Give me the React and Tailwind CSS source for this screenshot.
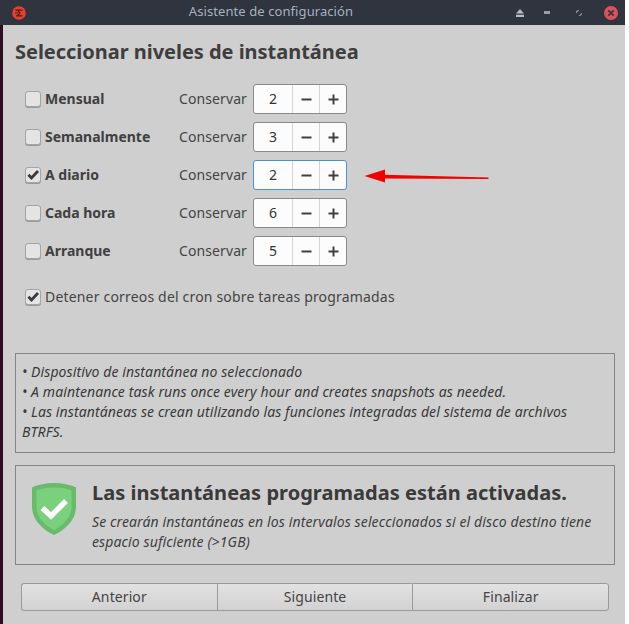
const font = { fontFamily: '"Noto Sans", sans-serif' };

function Check({ checked }) {
  return (
    <span className="relative flex h-[16px] w-[16px] shrink-0 items-center justify-center rounded-[3px] border border-[#a4a4a4] bg-[#e4e4e4] shadow-[0_1px_0_#9a9a9a]">
      {checked && (
        <svg width="14" height="14" viewBox="0 0 14 14" className="absolute left-[0px] top-[0px]">
          <path d="M2.4 6.8 L5.5 10 L12 3" fill="none" stroke="#3a3a3a" strokeWidth="2.8" />
        </svg>
      )}
    </span>
  );
}

function Row({ label, value, checked, focused }) {
  return (
    <div className="flex h-[30px] items-center">
      <div className="flex w-[154px] shrink-0 items-center gap-[4px]">
        <Check checked={checked} />
        <span className="pb-[2px] text-[14px] font-bold text-[#404040]">{label}</span>
      </div>
      <span className="w-[74px] shrink-0 pb-[2px] text-[14px] tracking-[0.1px] text-[#444444]">Conservar</span>
      <div
        className={
          "flex h-[30px] w-[94px] items-stretch overflow-hidden rounded-[3px] border bg-[#fcfcfc] " +
          (focused ? "border-[#4a90d9]" : "border-[#8a8a8a]")
        }
      >
        <div className="flex w-[38px] items-center justify-center pb-[1px] text-[14px] text-[#333333]">{value}</div>
        <div className="flex w-[27px] items-center justify-center border-l border-[#d4d4d4]">
          <svg width="11" height="11" viewBox="0 0 11 11"><path d="M0.5 5.5H10.5" stroke="#404040" strokeWidth="2" /></svg>
        </div>
        <div className="flex flex-1 items-center justify-center border-l border-[#d4d4d4]">
          <svg width="11" height="11" viewBox="0 0 11 11"><path d="M0.5 5.5H10.5M5.5 0.5V10.5" stroke="#404040" strokeWidth="2" /></svg>
        </div>
      </div>
    </div>
  );
}

function Btn({ children, cls }) {
  return (
    <div className={"flex h-[28px] flex-1 items-center justify-center border border-[#9a9a9a] bg-gradient-to-b from-[#e2e2e2] to-[#d2d2d2] pb-[1px] text-[14px] tracking-[0.1px] text-[#444444] " + cls}>
      {children}
    </div>
  );
}

export default function App() {
  return (
    <div style={font} className="flex h-[624px] w-[625px] flex-col overflow-hidden">
      <div className="flex h-[25px] shrink-0 items-center bg-[#2f343f] pl-[12px] pr-[7px]">
        <svg width="14" height="14" viewBox="0 0 14 14">
          <circle cx="7" cy="7" r="6.8" fill="#e8402d" />
          <path d="M3.5 4.2h7M4 9.8h6.5M5.5 4.2 8 7 5.5 9.8M3 7h3" fill="none" stroke="#4a1a18" strokeWidth="1.2" />
        </svg>
        <div className="flex-1 pb-[1px] text-center text-[13px] tracking-[0.08px] text-[#a9b0bd]">Asistente de configuración</div>
        <div className="flex items-center">
          <svg width="8" height="8" viewBox="0 0 8 8" className="mr-[20px]">
            <path d="M4 0 8 4.5H0Z M0 5.7H8V8H0Z" fill="#b6bbc7" />
          </svg>
          <svg width="6" height="3" viewBox="0 0 6 3" className="mr-[26px]">
            <rect width="6" height="3" fill="#9a9eab" />
          </svg>
          <svg width="6" height="6" viewBox="0 0 6 6" className="mr-[22px]">
            <path d="M0 6V1.5L1.5 0H3.5L0 3.5ZM6 0V4.5L4.5 6H2.5L6 2.5Z" fill="#8b8f9c" />
          </svg>
          <svg width="14" height="14" viewBox="0 0 14 14">
            <circle cx="7" cy="7" r="7" fill="#d9535f" />
            <path d="M4.3 4.3 9.7 9.7M9.7 4.3 4.3 9.7" stroke="#3a3440" strokeWidth="1.8" />
          </svg>
        </div>
      </div>

      <div className="flex min-h-0 flex-1 border-l-[3px] border-[#2c0f1f] bg-[#cfcfcf]">
        <div className="flex flex-1 flex-col pl-[12px] pr-[10px]">
          <h1 className="mt-[12px] h-[30px] text-[20px] leading-[30px] font-bold tracking-[-0.03px] text-[#3e3e3e]">
            Seleccionar niveles de instantánea
          </h1>
          <div className="relative mt-[17px] flex flex-col gap-[8px] pl-[10px]">
            <Row label="Mensual" value="2" />
            <Row label="Semanalmente" value="3" />
            <Row label="A diario" value="2" checked focused />
            <Row label="Cada hora" value="6" />
            <Row label="Arranque" value="5" />
            <svg width="128" height="16" viewBox="0 0 128 16" className="absolute left-[349px] top-[84px]">
              <path d="M0.5 8 21 1.5V14.5Z" fill="#f00000" />
              <path d="M20 6.8 124.5 9.5V11L20 10.4Z" fill="#f50000" />
            </svg>
          </div>
          <div className="mt-[21px] flex items-center gap-[4px] pl-[10px]">
            <Check checked />
            <span className="text-[14px] leading-[20px] tracking-[0.18px] text-[#444444]">Detener correos del cron sobre tareas programadas</span>
          </div>

          <div className="mt-[46px] h-[100px] border border-[#858585] px-[6px] pt-[8px] text-[14px] leading-[20px] tracking-[0.1px] italic text-[#3a3a3a]">
            <div>• Dispositivo de instantánea no seleccionado</div>
            <div>• A maintenance task runs once every hour and creates snapshots as needed.</div>
            <div>• Las instantáneas se crean utilizando las funciones integradas del sistema de archivos<br />BTRFS.</div>
          </div>

          <div className="mt-[12px] flex h-[100px] items-start border border-[#858585] pl-[16px] pr-[10px]">
            <svg width="44" height="52" viewBox="0 0 44 52" className="mt-[17px] shrink-0">
              <path d="M22 0C30 0 38 1.5 44 4.5V24C44 37 33 47 22 52 11 47 0 37 0 24V4.5C6 1.5 14 0 22 0Z" fill="#68bb6b" />
              <path d="M22 4.5C29 4.5 35 5.7 39.5 7.5V24C39.5 34.5 31 42.5 22 47 13 42.5 4.5 34.5 4.5 24V7.5C9 5.7 15 4.5 22 4.5Z" fill="#7ad07c" />
              <path d="M10.5 25 19 33 34 18" fill="none" stroke="#ffffff" strokeWidth="5.5" />
            </svg>
            <div className="ml-[16px] min-w-0 flex-1">
              <div className="mt-[12px] h-[30px] text-[20px] leading-[30px] font-bold tracking-[0.03px] text-[#3a3a3a]">
                Las instantáneas programadas están activadas.
              </div>
              <div className="mt-[4px] text-[14px] leading-[20px] tracking-[0.12px] italic text-[#3f3f3f]">
                Se crearán instantáneas en los intervalos seleccionados si el disco destino tiene<br />espacio suficiente (&gt;1GB)
              </div>
            </div>
          </div>

          <div className="mt-[18px] flex pl-[6px] pr-[6px]">
            <Btn cls="rounded-l-[3px] border-r-0">Anterior</Btn>
            <Btn cls="border-r-0">Siguiente</Btn>
            <Btn cls="rounded-r-[3px]">Finalizar</Btn>
          </div>
        </div>
      </div>
    </div>
  );
}
